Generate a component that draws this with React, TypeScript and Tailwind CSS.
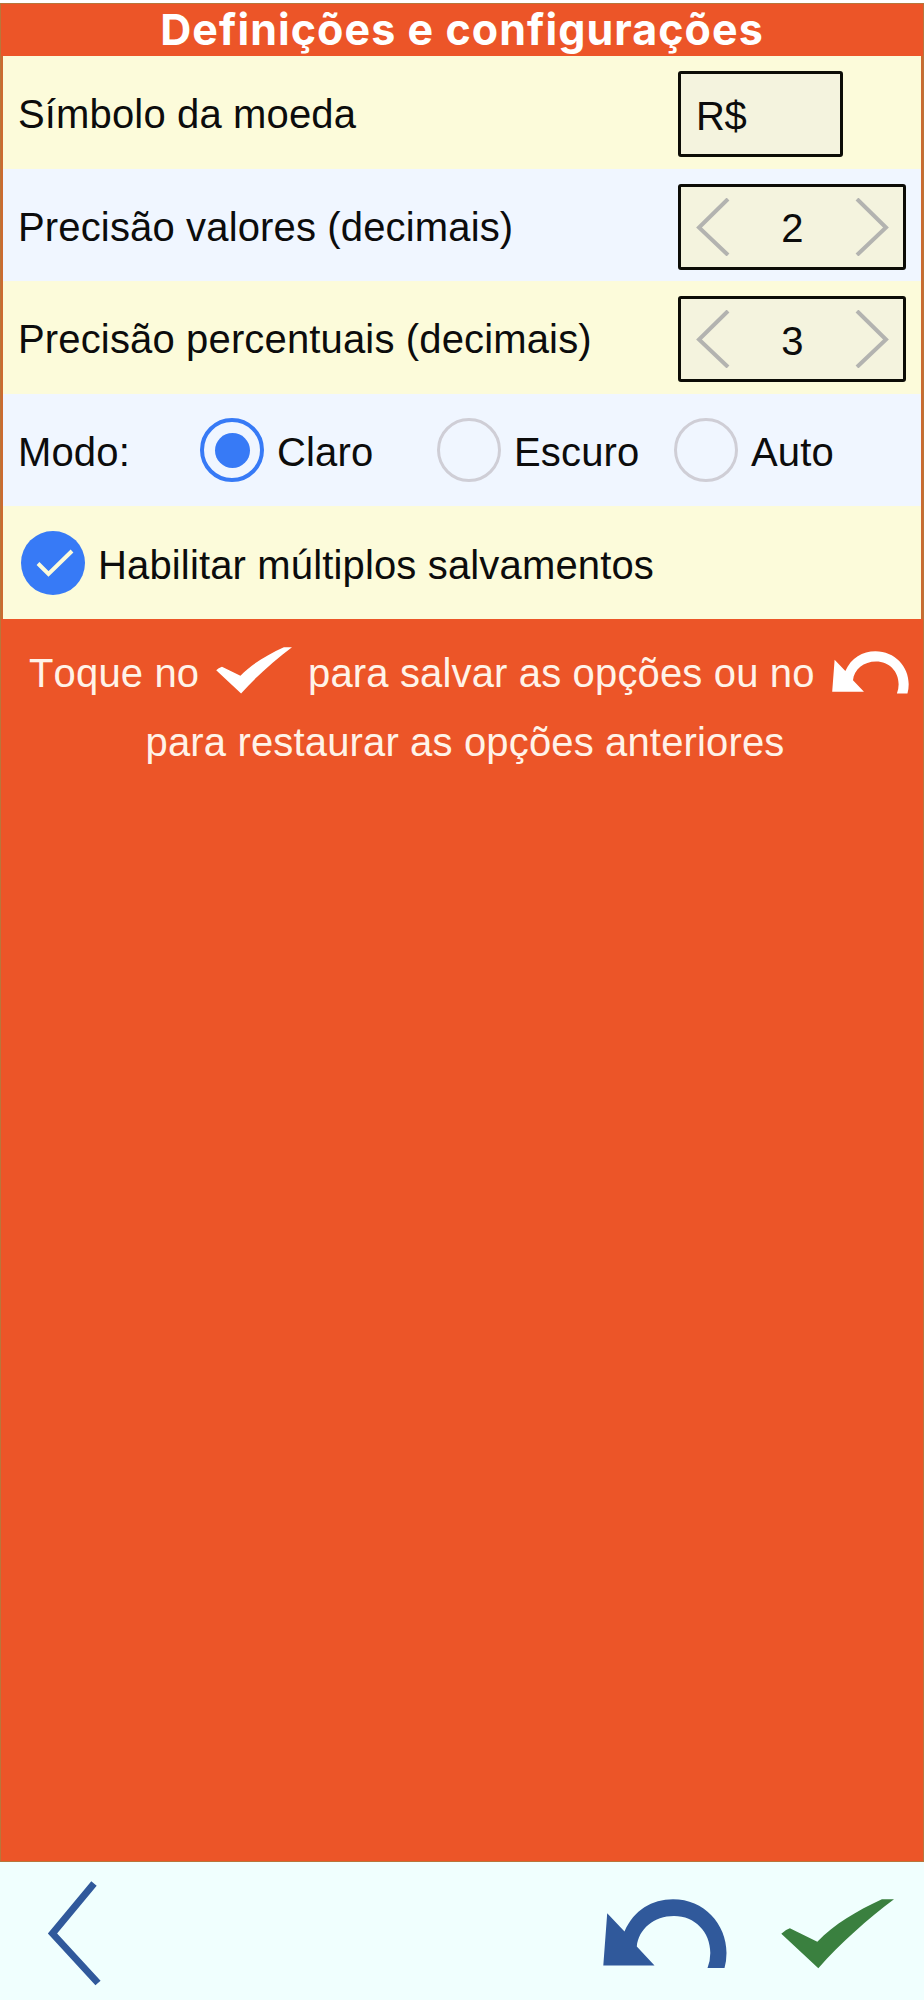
import type { ReactNode } from 'react';

function UndoIcon({ className }: { className: string }) {
  return (
    <svg viewBox="0 0 124 70" preserveAspectRatio="none" className={className} fill="currentColor">
      <path d="M4.2 14.2 L21.5 32.5 C31 11 49 0.3 70 0.3 C101 0.3 123.5 25 123.5 54 Q123.5 62 121.5 69 H104.5 Q107.3 62 107.3 54 C107.3 33 92 17 71 17 C51 17 35.5 30 33.8 47.5 L51.5 66.5 H0.3 Z" />
    </svg>
  );
}

function CheckIcon({ className }: { className: string }) {
  return (
    <svg viewBox="0 0 112 70" preserveAspectRatio="none" className={className} fill="currentColor">
      <path d="M0.3 34.8 Q3.5 31 8.8 29.3 L36 42.8 C53 25 75 12 100 0.3 H112 C86 20 59 44 37 69.3 Z" />
    </svg>
  );
}

function Row({ blue, children }: { blue?: boolean; children: ReactNode }) {
  return (
    <div className={`flex h-[112.6px] items-center pl-[15px] ${blue ? 'bg-[#f0f6ff]' : 'bg-[#fcfbda]'}`}>
      {children}
    </div>
  );
}

function Stepper({ value }: { value: number }) {
  return (
    <div className="mt-[4px] mr-[15px] ml-auto flex h-[86px] w-[228px] items-center justify-between rounded-[3px] border-[3px] border-[#0c0c06] bg-[#f4f3de] pr-[14px] pl-[15px]">
      <svg className="h-[58px] w-[34px]" viewBox="0 0 34 58" fill="none" stroke="#b3b3b0" strokeWidth="4">
        <path d="M32 1 L3 29.5 L32 57" />
      </svg>
      <span className="pt-[3px]">{value}</span>
      <svg className="h-[58px] w-[34px]" viewBox="0 0 34 58" fill="none" stroke="#b3b3b0" strokeWidth="4">
        <path d="M2 1 L31 29.5 L2 57" />
      </svg>
    </div>
  );
}

function Radio({ label, checked }: { label: string; checked?: boolean }) {
  return (
    <label className="flex w-[237px] shrink-0 items-center">
      <span
        className={`flex size-[64px] items-center justify-center rounded-full ${
          checked ? 'border-4 border-[#377af6]' : 'border-[3px] border-[#cfced6]'
        }`}
      >
        {checked && <span className="size-[35px] rounded-full bg-[#377af6]" />}
      </span>
      <span className="ml-[13px] pt-[4px]">{label}</span>
    </label>
  );
}

export default function App() {
  return (
    <div className="flex h-[2000px] w-[924px] flex-col bg-white pt-[3px] font-['Liberation_Sans',Arial,sans-serif] text-[40px] leading-[46px] tracking-[0.15px] whitespace-nowrap text-[#0c0c0c] [font-kerning:none]">
      <main className="flex h-[1859px] flex-col border border-[#b8763a] bg-[#ec5528]">
        <h1 className="h-[52px] text-center font-['Inter',sans-serif] text-[43px] leading-[50px] font-bold tracking-[1.05px] text-white [font-kerning:auto]">
          Definições e configurações
        </h1>

        <section className="border-x-2 border-[#cc6a30]">
          <Row>
            <span className="pt-[4px]">Símbolo da moeda</span>
            <div className="mt-[4px] mr-[78px] ml-auto flex h-[86px] w-[165px] items-center rounded-[3px] border-[3px] border-[#0c0c06] bg-[#f4f3de] pt-[3px] pl-[15px] tracking-[-0.5px]">
              R$
            </div>
          </Row>
          <Row blue>
            <span className="pt-[4px]">Precisão valores (decimais)</span>
            <Stepper value={2} />
          </Row>
          <Row>
            <span className="pt-[4px]">Precisão percentuais (decimais)</span>
            <Stepper value={3} />
          </Row>
          <Row blue>
            <span className="w-[182px] shrink-0 pt-[4px]">Modo:</span>
            <Radio label="Claro" checked />
            <Radio label="Escuro" />
            <Radio label="Auto" />
          </Row>
          <Row>
            <span className="ml-[3px] flex size-[64px] items-center justify-center rounded-full bg-[#377af6]">
              <svg className="mt-px ml-[4px] h-[28px] w-[38px]" viewBox="0 0 38 28" fill="none" stroke="#fcfbda" strokeWidth="4">
                <path d="M2 14.5 L12.5 25 L36 2" />
              </svg>
            </span>
            <span className="ml-[13px] pt-[4px]">Habilitar múltiplos salvamentos</span>
          </Row>
        </section>

        <section className="pt-[20px] text-[#fff3e8]">
          <p className="flex h-[69px] items-center pl-[28px]">
            <span className="w-[171px]">Toque no</span>
            <CheckIcon className="mb-[6px] ml-[16px] h-[47px] w-[76px] text-white" />
            <span className="ml-[16px] w-[510px]">para salvar as opções ou no</span>
            <UndoIcon className="mb-px ml-[14px] h-[43px] w-[77px] shrink-0 text-white" />
          </p>
          <p className="flex h-[68px] items-center justify-center pl-[6px]">para restaurar as opções anteriores</p>
        </section>
      </main>

      <footer className="flex h-[138px] items-start bg-[#f0fffe]">
        <svg className="mt-[19px] ml-[47px] h-[105px] w-[54px]" viewBox="0 0 54 105" fill="none" stroke="#30599b" strokeWidth="7">
          <path d="M47 2.5 L5.5 52.5 L51 102" />
        </svg>
        <UndoIcon className="mt-[37px] ml-[502px] h-[70px] w-[124px] text-[#30599b]" />
        <CheckIcon className="mt-[37px] ml-[54px] h-[70px] w-[113px] text-[#3a803f]" />
      </footer>
    </div>
  );
}
